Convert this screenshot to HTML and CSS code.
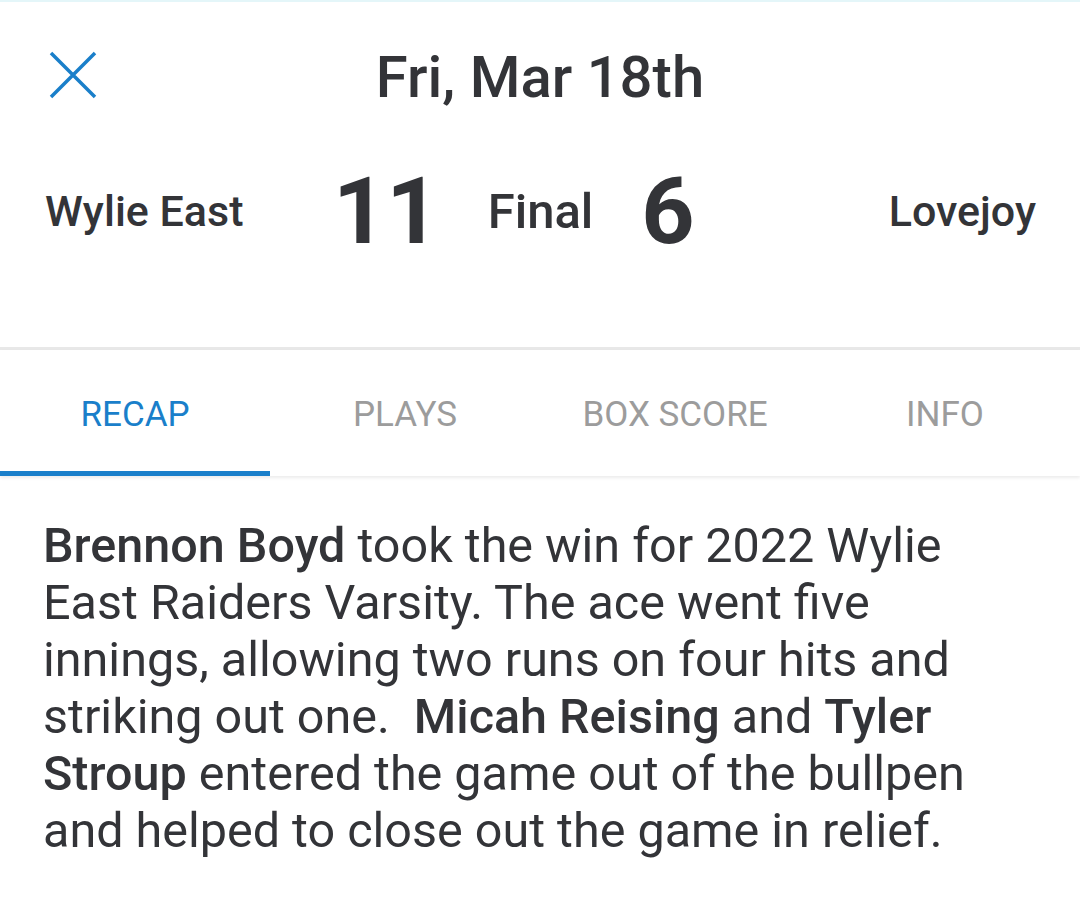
FILE: index.html
```html
<!DOCTYPE html>
<html lang="en">
<head>
    <meta charset="UTF-8">
    <title>Fri, Mar 18th</title>
    <link rel="stylesheet" href="styles.css">
</head>
<body>
<div class="game">
    <div class="header">
        <div class="titlebar">
            <a href="javascript:;" class="close">
                <svg width="48" height="48" viewBox="0 0 48 48">
                    <path d="M2 2 L46 46 M46 2 L2 46" stroke="#1a7fca" stroke-width="3.5" fill="none"/>
                </svg>
            </a>
            <h1 class="date">Fri, Mar 18th</h1>
        </div>
        <div class="scoreline">
            <span class="team home">Wylie East</span>
            <span class="score home">11</span>
            <span class="status">Final</span>
            <span class="score away">6</span>
            <span class="team away">Lovejoy</span>
        </div>
    </div>
    <ul class="tabs">
        <li class="tab active"><a href="javascript:;">RECAP</a></li>
        <li class="tab"><a href="javascript:;">PLAYS</a></li>
        <li class="tab"><a href="javascript:;">BOX SCORE</a></li>
        <li class="tab"><a href="javascript:;">INFO</a></li>
    </ul>
    <p class="recap">
        <b>Brennon Boyd</b> took the win for 2022 Wylie East Raiders Varsity. The ace went five
        innings, allowing two runs on four hits and striking out one.&nbsp; <b>Micah Reising</b> and
        <b>Tyler Stroup</b> entered the game out of the bullpen and helped to close out the game in relief.
    </p>
</div>
</body>
</html>
```

FILE: styles.css
```css
body {
    margin: 0;
    background-color: #fff;
    font-family: Roboto, "Noto Sans", sans-serif;
    color: #333438;
}

a {
    text-decoration: none;
}

ul {
    list-style: none;
    padding: 0;
    margin: 0;
}

.header {
    height: 350px;
    border-top: 2px solid #e4f6f9;
    border-bottom: 3px solid #e8e8e8;
    box-sizing: border-box;
}

.titlebar {
    position: relative;
    height: 152px;
    display: flex;
    align-items: center;
    justify-content: center;
}

.titlebar .close {
    position: absolute;
    left: 49px;
    top: 49px;
    display: block;
    width: 48px;
    height: 48px;
}

.titlebar .close svg {
    display: block;
}

.date {
    margin: 0 0 2px;
    font-size: 58px;
    font-weight: 500;
}

/* home | score | Final | score | away, Final stays in the middle */
.scoreline {
    display: grid;
    grid-template-columns: 1fr 150px auto 150px 1fr;
    align-items: center;
    height: 114px;
    padding: 0 44px 0 45px;
}

.team {
    font-size: 43px;
    font-weight: 500;
}

.team.away {
    text-align: right;
}

.score {
    font-size: 93px;
    font-weight: 700;
}

.score.home {
    text-align: right;
}

.status {
    margin: 0 48px;
    font-size: 49px;
    font-weight: 500;
}

.tabs {
    display: flex;
    height: 126px;
    box-shadow: 0 2px 3px rgba(0, 0, 0, 0.08);
}

.tab {
    flex: 1;
    box-sizing: border-box;
    border-bottom: 5px solid transparent;
}

.tab a {
    display: block;
    text-align: center;
    line-height: 130px;
    font-size: 35px;
    color: #9c9c9c;
}

.tab.active {
    border-bottom-color: #1a7fca;
}

.tab.active a {
    color: #1a7fca;
}

.recap {
    margin: 0;
    padding: 41px 90px 41px 43px;
    font-size: 48.5px;
    line-height: 57px;
}

.recap b {
    font-weight: 500;
}
```
